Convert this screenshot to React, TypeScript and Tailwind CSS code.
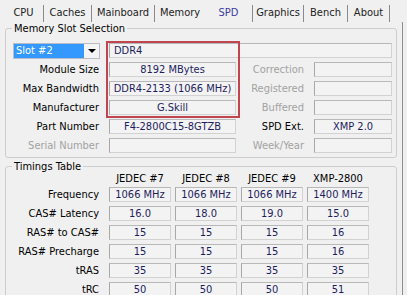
import type { ReactNode } from "react";

const tabs = [
  { name: "CPU", w: "w-[40px]" },
  { name: "Caches", w: "w-[48px]" },
  { name: "Mainboard", w: "w-[63px]" },
  { name: "Memory", w: "w-[50px]", noSep: true },
  { name: "SPD", w: "w-[48px]", active: true },
  { name: "Graphics", w: "w-[51px]" },
  { name: "Bench", w: "w-[44px]" },
  { name: "About", w: "w-[42px]" },
];

const infoRows = [
  { label: "Module Size", value: "8192 MBytes", right: "Correction", rightValue: "", rightMuted: true },
  { label: "Max Bandwidth", value: "DDR4-2133 (1066 MHz)", right: "Registered", rightValue: "", rightMuted: true },
  { label: "Manufacturer", value: "G.Skill", right: "Buffered", rightValue: "", rightMuted: true },
  { label: "Part Number", value: "F4-2800C15-8GTZB", right: "SPD Ext.", rightValue: "XMP 2.0", rightMuted: false },
  { label: "Serial Number", value: "", muted: true, right: "Week/Year", rightValue: "", rightMuted: true },
];

const timingCols = ["JEDEC #7", "JEDEC #8", "JEDEC #9", "XMP-2800"];

const timingRows = [
  { label: "Frequency", values: ["1066 MHz", "1066 MHz", "1066 MHz", "1400 MHz"] },
  { label: "CAS# Latency", values: ["16.0", "18.0", "19.0", "15.0"] },
  { label: "RAS# to CAS#", values: ["15", "15", "15", "16"] },
  { label: "RAS# Precharge", values: ["15", "15", "15", "16"] },
  { label: "tRAS", values: ["35", "35", "35", "35"] },
  { label: "tRC", values: ["50", "50", "50", "51"] },
];

function Field({ children, className = "" }: { children?: ReactNode; className?: string }) {
  return (
    <div
      className={`h-[15px] flex items-center justify-center bg-[#f3f3f3] border border-[#d2d2d2] border-l-[#a8a8a8] border-t-[#b8b8b8] text-[#1d1d5e] leading-none whitespace-nowrap ${className}`}
    >
      {children}
    </div>
  );
}

export default function App() {
  return (
    <div className="w-[407px] h-[295px] overflow-hidden bg-[#f0f0f0] text-[11px] text-black font-['DejaVu_Sans_Condensed','Liberation_Sans',sans-serif]">
      {/* tab strip */}
      <div className="h-[22px] flex pl-[4px]">
        {tabs.map(t => (
          <div
            key={t.name}
            className={`${t.w} mt-[5px] h-[17px] flex items-center justify-center pb-[3px] leading-none ${
              t.noSep ? "" : "border-r border-[#8a8a8a]"
            } ${t.active ? "text-[#3b3ba3]" : "text-[#222]"}`}
          >
            {t.name}
          </div>
        ))}
      </div>

      {/* tab body */}
      <div className="w-[403px] h-[273px] border-r border-[#8d8d8d]">
        {/* Memory Slot Selection */}
        <fieldset className="relative mx-[5px] border border-[#cdcdcd] rounded-[3px] pb-[4px]">
          <legend className="ml-[6px] px-[2px] leading-[13px]">Memory Slot Selection</legend>

          <div className="flex flex-col gap-[4px] pt-[8px]">
            <div className="flex h-[15px] items-center">
              <div className="ml-[7px] w-[87px] h-[16px] flex border border-[#b8bcc4] bg-white">
                <div className="flex-1 bg-[#3399ff] text-white flex items-center pl-[2px] leading-none">
                  Slot #2
                </div>
                <div className="w-[15px] flex items-center justify-center bg-[#f4f4f4]">
                  <div className="w-0 h-0 border-l-[4px] border-r-[4px] border-t-[4px] border-l-transparent border-r-transparent border-t-black" />
                </div>
              </div>
              <Field className="ml-[9px] w-[283px] !justify-start pl-[4px]">DDR4</Field>
            </div>

            {infoRows.map(r => (
              <div key={r.label} className="flex h-[15px] items-center">
                <div className={`w-[93px] text-right leading-none ${r.muted ? "text-[#a2a2a2]" : ""}`}>
                  {r.label}
                </div>
                <Field className="ml-[10px] w-[127px]">{r.value}</Field>
                <div className={`w-[68px] text-right leading-none ${r.rightMuted ? "text-[#a2a2a2]" : ""}`}>
                  {r.right}
                </div>
                <Field className="ml-[10px] w-[78px]">{r.rightValue}</Field>
              </div>
            ))}
          </div>

          {/* highlight box */}
          <div className="absolute left-[100px] top-[6px] w-[134px] h-[77px] border-2 border-[#c0454f]" />
        </fieldset>

        {/* Timings Table */}
        <fieldset className="mx-[5px] mt-[2px] border border-[#cdcdcd] rounded-[3px] pb-[10px]">
          <legend className="ml-[6px] px-[2px] leading-[13px]">Timings Table</legend>

          <div className="flex flex-col gap-[4px]">
            <div className="flex h-[10px] items-center">
              <div className="w-[93px]" />
              <div className="ml-[10px] flex gap-[4px]">
                {timingCols.map(c => (
                  <div key={c} className="w-[62px] text-center leading-none whitespace-nowrap">
                    {c}
                  </div>
                ))}
              </div>
            </div>

            {timingRows.map(r => (
              <div key={r.label} className="flex h-[15px] items-center">
                <div className="w-[93px] text-right leading-none">{r.label}</div>
                <div className="ml-[10px] flex gap-[4px]">
                  {r.values.map((v, i) => (
                    <Field key={i} className="w-[62px]">
                      {v}
                    </Field>
                  ))}
                </div>
              </div>
            ))}
          </div>
        </fieldset>
      </div>
    </div>
  );
}
